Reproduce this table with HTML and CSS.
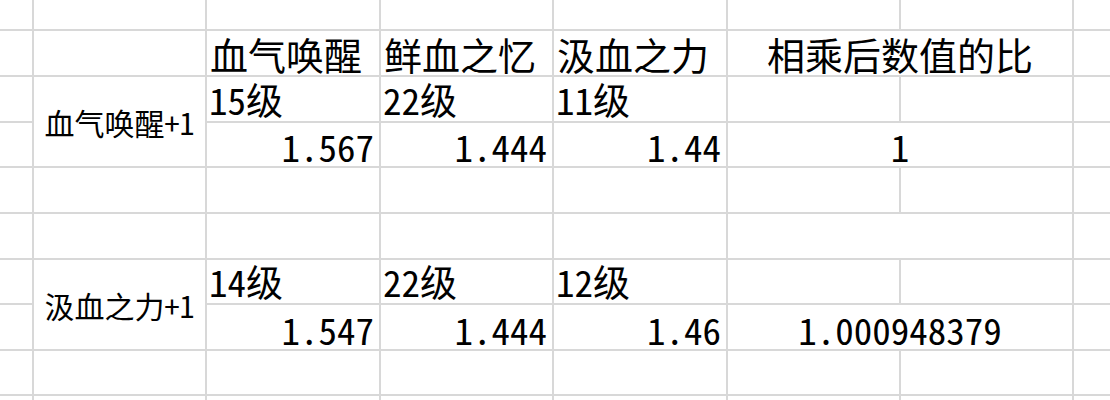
FILE: index.html
```html
<!DOCTYPE html>
<html lang="zh-CN">
<head>
<meta charset="utf-8">
<title>Sheet</title>
<link rel="stylesheet" href="styles.css">
</head>
<body>
<div class="sheet">
  <!-- row 1 -->
  <div class="c"></div><div class="c"></div><div class="c"></div><div class="c"></div>
  <div class="c"></div><div class="c"></div><div class="c"></div><div class="c"></div>
  <!-- row 2: headers -->
  <div class="c"></div><div class="c"></div>
  <div class="c hd">血气唤醒</div>
  <div class="c hd">鲜血之忆</div>
  <div class="c hd">汲血之力</div>
  <div class="c hd ctr span2">相乘后数值的比</div>
  <div class="c"></div>
  <!-- row 3 -->
  <div class="c"></div>
  <div class="c lbl rspan2">血气唤醒+1</div>
  <div class="c lv">15级</div>
  <div class="c lv">22级</div>
  <div class="c lv">11级</div>
  <div class="c"></div><div class="c"></div><div class="c"></div>
  <!-- row 4 -->
  <div class="c"></div>
  <div class="c num">1.567</div>
  <div class="c num">1.444</div>
  <div class="c num">1.44</div>
  <div class="c num ctr span2">1</div>
  <div class="c"></div>
  <!-- row 5 -->
  <div class="c"></div><div class="c"></div><div class="c"></div><div class="c"></div>
  <div class="c"></div><div class="c"></div><div class="c"></div><div class="c"></div>
  <!-- row 6 -->
  <div class="c"></div><div class="c"></div><div class="c"></div><div class="c"></div>
  <div class="c"></div><div class="c span2"></div><div class="c"></div>
  <!-- row 7 -->
  <div class="c"></div>
  <div class="c lbl rspan2">汲血之力+1</div>
  <div class="c lv">14级</div>
  <div class="c lv">22级</div>
  <div class="c lv">12级</div>
  <div class="c"></div><div class="c"></div><div class="c"></div>
  <!-- row 8 -->
  <div class="c"></div>
  <div class="c num">1.547</div>
  <div class="c num">1.444</div>
  <div class="c num">1.46</div>
  <div class="c num ctr span2">1.000948379</div>
  <div class="c"></div>
  <!-- row 9 -->
  <div class="c"></div><div class="c"></div><div class="c"></div><div class="c"></div>
  <div class="c"></div><div class="c"></div><div class="c"></div><div class="c"></div>
  <!-- row 10 -->
  <div class="c"></div><div class="c"></div><div class="c"></div><div class="c"></div>
  <div class="c"></div><div class="c"></div><div class="c"></div><div class="c"></div>
</div>
</body>
</html>
```
FILE: styles.css
```css
html, body {
  margin: 0;
  padding: 0;
  background: #ffffff;
}

.sheet {
  width: 1110px;
  height: 400px;
  overflow: hidden;
  display: grid;
  grid-template-columns: 32px 171px 172px 171px 172px 171px 171px 1fr;
  grid-template-rows: 29px 44px 44px 43px 44px 44px 43px 44px 43px 1fr;
  gap: 2px;
  background: #d8d8d8;
  font-family: "Noto Sans Mono CJK SC", "Noto Sans CJK SC", sans-serif;
  font-feature-settings: "hwid";
  font-weight: 300;
  color: #000;
}

.c {
  background: #ffffff;
  display: flex;
  align-items: flex-end;
  justify-content: flex-start;
  white-space: nowrap;
  overflow: visible;
  min-width: 0;
}

.span2 {
  grid-column: span 2;
}

.rspan2 {
  grid-row: span 2;
}

.hd {
  font-size: 38px;
  line-height: 38px;
  padding: 0 0 2px 3px;
}

.lv {
  font-size: 37px;
  line-height: 37px;
  padding: 0 0 3px 2px;
}

.num {
  font-size: 37px;
  line-height: 37px;
  justify-content: flex-end;
  padding: 0 5px 1px 0;
}

.ctr {
  justify-content: center;
  padding-left: 0;
  padding-right: 0;
}

.lbl {
  font-size: 30px;
  line-height: 30px;
  align-items: center;
  justify-content: center;
}
```
